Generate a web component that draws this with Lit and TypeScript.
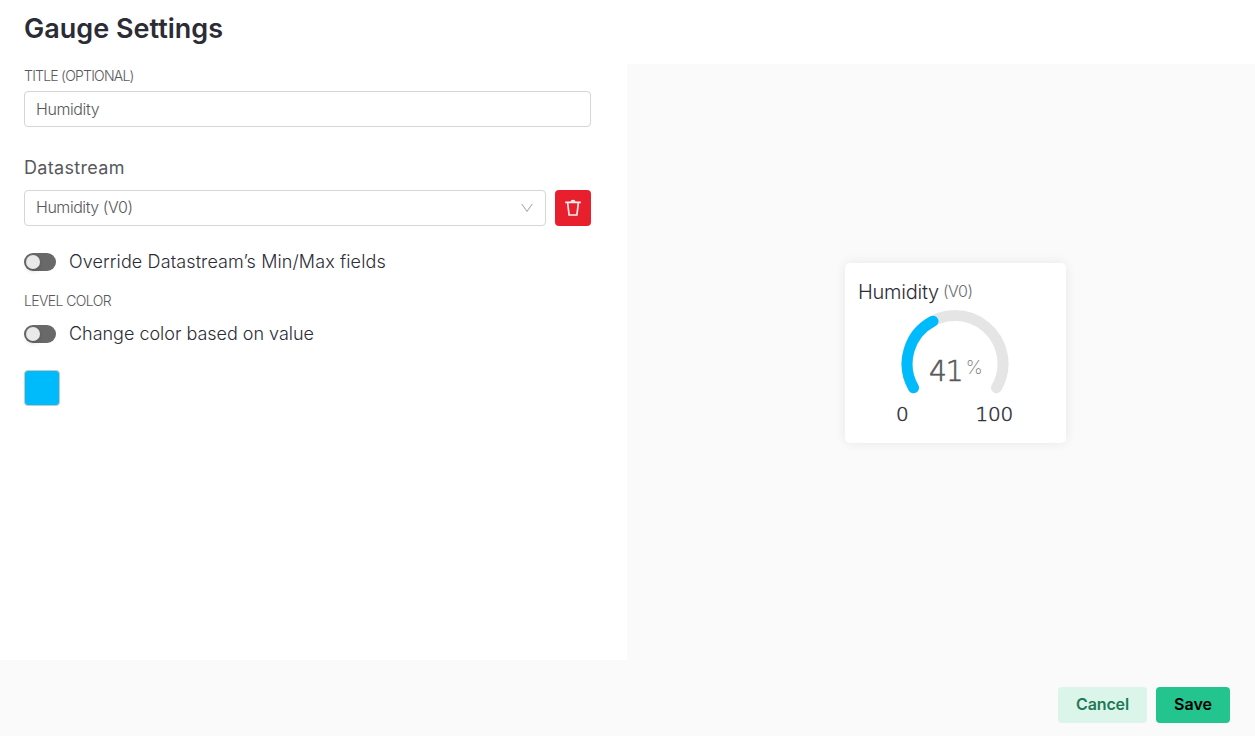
import { LitElement, html, css } from "lit";
import { customElement, property } from "lit/decorators.js";

@customElement("toggle-row")
class ToggleRow extends LitElement {
  @property() label = "";

  static styles = css`
    :host { display: flex; align-items: center; height: 24px; }
    .track {
      box-sizing: border-box; width: 32px; height: 18px; padding: 2px;
      border-radius: 9px; background: #696969; flex: none;
    }
    .knob {
      width: 14px; height: 14px; border-radius: 50%; background: #e9e9e9;
      box-shadow: 0 2px 4px rgba(0, 35, 11, 0.2);
    }
    .label {
      margin-left: 13px; font-size: 18px; font-weight: 350; line-height: 24px;
      letter-spacing: var(--tracking, 0); color: #2c2c36; white-space: nowrap;
    }
  `;

  render() {
    return html`<div class="track"><div class="knob"></div></div>
      <span class="label">${this.label}</span>`;
  }
}

@customElement("gauge-card")
class GaugeCard extends LitElement {
  static styles = css`
    :host {
      display: block; box-sizing: border-box; width: 221px; height: 180px;
      padding: 17px 13px 0; border-radius: 5px; background: #fff;
      box-shadow: 0 0 12px rgba(0, 0, 0, 0.08);
    }
    .head { display: flex; height: 24px; line-height: 24px; white-space: nowrap; }
    .name { font-size: 20px; font-weight: 350; letter-spacing: -0.25px; color: #2c2c36; }
    .pin { margin-left: 4px; font-size: 16px; font-weight: 300; line-height: 22px; letter-spacing: -0.5px; color: #6c6c70; }
    .dial { display: grid; width: 108px; height: 86px; margin: 6px 0 0 43px; }
    .dial > * { grid-area: 1 / 1; }
    .reading { display: flex; padding: 45px 0 0 28px; height: 34px; }
    .value, .limits {
      font-family: "DejaVu Sans", sans-serif; font-weight: 200;
    }
    .value {
      font-size: 28px; line-height: 34px; letter-spacing: -1px; color: #58585d;
      -webkit-text-stroke: 0.6px #58585d;
    }
    .unit { margin-left: 3px; font-size: 19px; font-weight: 250; line-height: 26px; color: #77777b; }
    .limits {
      display: flex; justify-content: space-between; width: 117px; margin: 6px 0 0 38px;
      font-size: 20px; line-height: 24px; letter-spacing: -0.2px; color: #2c2c36;
      -webkit-text-stroke: 0.5px #2c2c36;
    }
  `;

  render() {
    return html`
      <div class="head"><span class="name">Humidity</span><span class="pin">(V0)</span></div>
      <div class="dial">
        <svg width="108" height="86" viewBox="0 0 108 86" fill="none" stroke-width="11" stroke-linecap="round">
          <path d="M12.5 77.7A48 48 0 1 1 95.5 77.7" stroke="#e5e5e5" />
          <path d="M12.5 77.7A48 48 0 0 1 32 11.2" stroke="#00bbfc" />
        </svg>
        <div class="reading"><span class="value">41</span><span class="unit">%</span></div>
      </div>
      <div class="limits"><span>0</span><span>100</span></div>
    `;
  }
}

@customElement("app-root")
class AppRoot extends LitElement {
  static styles = css`
    :host {
      display: flex; flex-direction: column; height: 736px; overflow: hidden;
      background: #fff; font-family: Inter, sans-serif;
    }
    .header { height: 64px; box-sizing: border-box; padding: 11px 24px 0; }
    h1 {
      margin: 0; font-size: 27px; font-weight: 620; line-height: 36px;
      letter-spacing: 0; color: #2c2c36;
    }
    .main { display: flex; height: 596px; }
    .form { box-sizing: border-box; width: 627px; padding: 2px 36px 0 24px; }
    .preview { flex: 1; display: grid; place-items: start center; background: #fafafa; }
    gauge-card { margin: 199px 0 0 29px; }
    .caption { font-size: 14px; font-weight: 300; line-height: 20px; color: #58585d; }
    .caption.title { letter-spacing: -0.77px; }
    .caption.level { margin-top: 17px; letter-spacing: -0.6px; }
    .field {
      box-sizing: border-box; height: 36px; padding: 0 11px; border: 1px solid #d5d5d8;
      border-radius: 4px; display: flex; align-items: center; justify-content: space-between;
      font-size: 16px; font-weight: 300; letter-spacing: -0.4px; color: #58585d; background: #fff;
    }
    .text { margin-top: 5px; }
    .section {
      margin-top: 29px; font-size: 18px; font-weight: 400; line-height: 24px;
      letter-spacing: 0.32px; color: #58585d;
    }
    .row { display: flex; gap: 9px; margin-top: 10px; }
    .select { flex: 1; }
    .choice { padding-bottom: 2px; letter-spacing: -0.45px; }
    .remove {
      display: grid; place-items: center; width: 36px; height: 36px; padding: 0;
      border: 0; border-radius: 4px; background: #e8202d;
    }
    .override { margin-top: 24px; --tracking: 0.11px; }
    .bycolor { margin-top: 11px; --tracking: -0.02px; }
    .swatch {
      box-sizing: border-box; width: 36px; height: 36px; margin-top: 24px;
      border: 1px solid #c8c8c8; border-radius: 4px; background: #00bbfc;
    }
    .footer {
      display: flex; justify-content: flex-end; gap: 9px; box-sizing: border-box;
      height: 76px; padding: 27px 25px 0; background: #fafafa;
    }
    .btn {
      height: 36px; padding: 0 0 1px; border: 0; border-radius: 4px;
      font: 640 16px/35px Inter, sans-serif;
    }
    .cancel { width: 89px; background: #dcf5eb; color: #1d7a56; letter-spacing: -0.15px; }
    .save { width: 74px; background: #24c48e; color: #000; }
  `;

  render() {
    return html`
      <div class="header"><h1>Gauge Settings</h1></div>
      <div class="main">
        <div class="form">
          <div class="caption title">TITLE (OPTIONAL)</div>
          <div class="field text">Humidity</div>
          <div class="section">Datastream</div>
          <div class="row">
            <div class="field select">
              <span class="choice">Humidity (V0)</span>
              <svg width="14" height="12" viewBox="0 0 14 12" fill="none" stroke="#b0b0b3" stroke-width="1.1">
                <path d="M1.7 2L7 9.3L12.3 2" />
              </svg>
            </div>
            <button class="remove" aria-label="Delete">
              <svg width="18" height="18" viewBox="0 0 18 18" fill="none" stroke="#fff" stroke-opacity=".92" stroke-width="1.7">
                <path d="M1.2 3.3H16.8M3.6 3.5L5.1 16H12.9L14.4 3.5" />
                <path d="M6.4 2.7Q6.8 .8 9 .8T11.6 2.7Z" fill="#fff" stroke="none" />
              </svg>
            </button>
          </div>
          <toggle-row class="override" label="Override Datastream’s Min/Max fields"></toggle-row>
          <div class="caption level">LEVEL COLOR</div>
          <toggle-row class="bycolor" label="Change color based on value"></toggle-row>
          <div class="swatch"></div>
        </div>
        <div class="preview"><gauge-card></gauge-card></div>
      </div>
      <div class="footer">
        <button class="btn cancel">Cancel</button>
        <button class="btn save">Save</button>
      </div>
    `;
  }
}
